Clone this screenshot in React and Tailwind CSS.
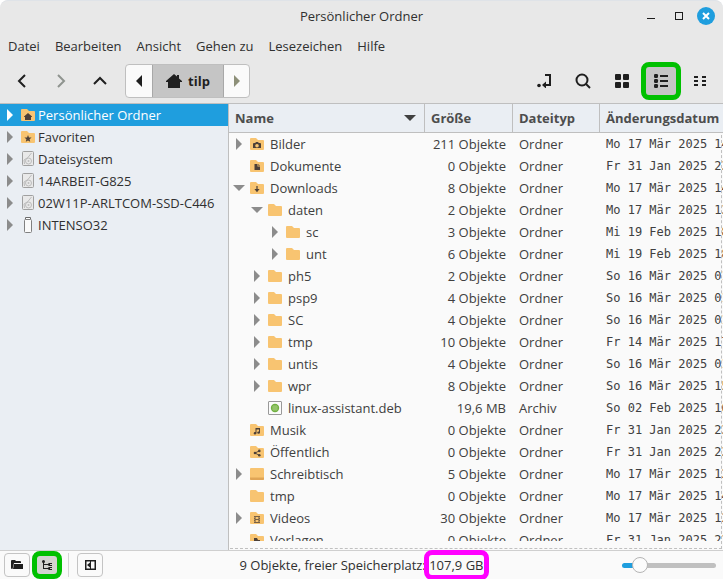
import React, { useState } from "react";

const places = [
  { name: "Persönlicher Ordner", icon: "home" },
  { name: "Favoriten", icon: "star" },
  { name: "Dateisystem", icon: "disk" },
  { name: "14ARBEIT-G825", icon: "disk" },
  { name: "02W11P-ARLTCOM-SSD-C446", icon: "disk" },
  { name: "INTENSO32", icon: "usb" },
];

const files = [
  { name: "Bilder", icon: "camera", level: 0, tree: "closed", size: "211 Objekte", type: "Ordner", date: "Mo 17 Mär 2025 14" },
  { name: "Dokumente", icon: "document", level: 0, size: "0 Objekte", type: "Ordner", date: "Fr 31 Jan 2025 23" },
  { name: "Downloads", icon: "download", level: 0, tree: "open", size: "8 Objekte", type: "Ordner", date: "Mo 17 Mär 2025 14" },
  { name: "daten", icon: "folder", level: 1, tree: "open", size: "2 Objekte", type: "Ordner", date: "Mo 17 Mär 2025 13" },
  { name: "sc", icon: "folder", level: 2, tree: "closed", size: "3 Objekte", type: "Ordner", date: "Mi 19 Feb 2025 18" },
  { name: "unt", icon: "folder", level: 2, tree: "closed", size: "6 Objekte", type: "Ordner", date: "Mi 19 Feb 2025 18" },
  { name: "ph5", icon: "folder", level: 1, tree: "closed", size: "2 Objekte", type: "Ordner", date: "So 16 Mär 2025 01" },
  { name: "psp9", icon: "folder", level: 1, tree: "closed", size: "4 Objekte", type: "Ordner", date: "So 16 Mär 2025 01" },
  { name: "SC", icon: "folder", level: 1, tree: "closed", size: "4 Objekte", type: "Ordner", date: "So 16 Mär 2025 01" },
  { name: "tmp", icon: "folder", level: 1, tree: "closed", size: "10 Objekte", type: "Ordner", date: "Fr 14 Mär 2025 17" },
  { name: "untis", icon: "folder", level: 1, tree: "closed", size: "4 Objekte", type: "Ordner", date: "So 16 Mär 2025 01" },
  { name: "wpr", icon: "folder", level: 1, tree: "closed", size: "8 Objekte", type: "Ordner", date: "So 16 Mär 2025 15" },
  { name: "linux-assistant.deb", icon: "deb", level: 1, size: "19,6 MB", type: "Archiv", date: "So 02 Feb 2025 16" },
  { name: "Musik", icon: "music", level: 0, size: "0 Objekte", type: "Ordner", date: "Fr 31 Jan 2025 23" },
  { name: "Öffentlich", icon: "share", level: 0, size: "0 Objekte", type: "Ordner", date: "Fr 31 Jan 2025 23" },
  { name: "Schreibtisch", icon: "desktop", level: 0, tree: "closed", size: "5 Objekte", type: "Ordner", date: "Mo 17 Mär 2025 12" },
  { name: "tmp", icon: "folder", level: 0, size: "0 Objekte", type: "Ordner", date: "Mo 17 Mär 2025 14" },
  { name: "Videos", icon: "video", level: 0, tree: "closed", size: "30 Objekte", type: "Ordner", date: "Mo 17 Mär 2025 12" },
  { name: "Vorlagen", icon: "template", level: 0, size: "0 Objekte", type: "Ordner", date: "Fr 31 Jan 2025 23" },
];

const menus = ["Datei", "Bearbeiten", "Ansicht", "Gehen zu", "Lesezeichen", "Hilfe"];

const indents = ["pl-1", "pl-[22px]", "pl-10"];

const emblems = {
  home: <path d="M7 4L3 7.5V8h1v3h6V8h1v-.5z" />,
  star: <path d="M7 4l1 2.4 2.6.2-2 1.7.6 2.5L7 9.4l-2.2 1.4.6-2.5-2-1.7L6 6.4z" />,
  camera: (
    <path
      fillRule="evenodd"
      d="M3 6q0-1 1-1h1.2l.8-1h2l.8 1H10q1 0 1 1v4H3zM7 5.9a1.8 1.8 0 1 0 0 3.6 1.8 1.8 0 0 0 0-3.6z"
    />
  ),
  document: <path d="M4.5 4h3v2.5H10V10H4.5zM8.3 4L10 5.7H8.3z" />,
  download: <path d="M6.4 4h1.2v3h2L7 10.2 4.4 7h2z" />,
  music: <path d="M5.5 4H10v4.6a1.4 1.2 0 1 1-1-1.1V5.6H6.5v3.6a1.4 1.2 0 1 1-1-1.1z" />,
  share: (
    <>
      <circle cx="5" cy="7" r="1.3" />
      <circle cx="9.3" cy="4.9" r="1.3" />
      <circle cx="9.3" cy="9.3" r="1.3" />
      <path d="M9.3 4.9L5 7l4.3 2.3" fill="none" stroke="#4d4038" strokeWidth=".9" />
    </>
  ),
  video: (
    <path
      fillRule="evenodd"
      opacity=".75"
      d="M4 4h6v7H4zM5.6 5v2h2.8V5zM5.6 8v2h2.8V8zM4.4 5v.8h.6V5zm0 2v.8h.6V7zm0 2v.8h.6V9zM9 5v.8h.6V5zm0 2v.8h.6V7zm0 2v.8h.6V9z"
    />
  ),
  template: <path d="M4 4h3l1 2h2v5H8L6.500 8.500 4 8z" />,
};

const FileIcon = ({ icon }) => {
  if (icon === "disk") {
    return (
      <svg width="14" height="18" viewBox="0 0 14 18" className="shrink-0">
        <rect x="1.500" y="1.500" width="11" height="14" rx="1" fill="#e9e9e9" stroke="#a0a0a0" />
        <path d="M3.500 14L3 10Q7 8.500 10.500 3" fill="none" stroke="#bcbcbc" />
        <circle cx="7.500" cy="11" r="3" fill="none" stroke="#bcbcbc" />
        <circle cx="7.500" cy="11" r="1" fill="#bcbcbc" />
      </svg>
    );
  }
  if (icon === "usb") {
    return (
      <svg width="14" height="18" viewBox="0 0 14 18" className="shrink-0">
        <path d="M4.500 3.500v-2h5v2" fill="#ffffff" stroke="#6d6d6d" />
        <rect x="3.500" y="3.500" width="7" height="13" rx="1" fill="#fafafa" stroke="#808080" />
      </svg>
    );
  }
  if (icon === "deb") {
    return (
      <svg width="14" height="14" viewBox="0 0 14 14" className="shrink-0">
        <rect x=".5" y=".5" width="13" height="13" rx=".5" fill="#fbfbfb" stroke="#999999" />
        <circle cx="7" cy="7" r="4.200" fill="#70b040" />
        <path d="M5 5h4v4H5zM7 5v4M5 7h4" fill="none" stroke="#a8d184" strokeWidth=".8" />
      </svg>
    );
  }
  if (icon === "desktop") {
    return (
      <svg width="14" height="12" viewBox="0 0 14 12" className="shrink-0">
        <rect width="14" height="12" rx="1" fill="#f8c471" />
        <path d="M0 9.500h14V11q0 1-1 1H1q-1 0-1-1z" fill="#e0a556" />
      </svg>
    );
  }
  return (
    <svg width="14" height="12" viewBox="0 0 14 12" className="shrink-0" fill="#4d4038">
      <path d="M0 1q0-1 1-1h5l2 2h5q1 0 1 1v8q0 1-1 1H1q-1 0-1-1z" fill="#f8c471" />
      {emblems[icon]}
    </svg>
  );
};

const Expander = ({ state, name, className = "text-[#8c8c8c]" }) => {
  if (!state) return <span className="w-3 shrink-0" />;
  return (
    <button aria-label={`${name} aufklappen`} className={`flex w-3 shrink-0 justify-center ${className}`}>
      {state === "open" ? (
        <svg width="12" height="6" viewBox="0 0 12 6" fill="currentColor">
          <path d="M0 0h12L6 6z" />
        </svg>
      ) : (
        <svg width="6" height="12" viewBox="0 0 6 12" fill="currentColor">
          <path d="M0 0l6 6-6 6z" />
        </svg>
      )}
    </button>
  );
};

const ToolButton = ({ label, children, className = "" }) => (
  <button aria-label={label} className={`relative flex h-8 w-8 items-center justify-center ${className}`}>
    {children}
  </button>
);

const TitleBar = () => (
  <header className="grid h-[31px] grid-cols-[1fr_auto_1fr] items-center rounded-t-lg border-t border-[#dfe3e8] text-[#303030]">
    <span />
    <h1>Persönlicher Ordner</h1>
    <div className="flex items-center justify-end gap-2 pr-2">
      <button aria-label="Minimieren" className="flex h-5 w-5 items-center justify-center">
        <svg width="10" height="10" viewBox="0 0 10 10">
          <path d="M1 7.500h8" stroke="#1c1c1c" />
        </svg>
      </button>
      <button aria-label="Maximieren" className="flex h-5 w-5 items-center justify-center">
        <svg width="8" height="8" viewBox="0 0 8 8">
          <rect x=".5" y=".5" width="7" height="7" fill="none" stroke="#1c1c1c" />
        </svg>
      </button>
      <button aria-label="Schließen" className="flex h-[18px] w-[18px] items-center justify-center rounded-full bg-[#1f9ede]">
        <svg width="8" height="8" viewBox="0 0 8 8">
          <path d="M1 1l6 6M7 1L1 7" stroke="#ffffff" strokeWidth="2" />
        </svg>
      </button>
    </div>
  </header>
);

const Toolbar = () => (
  <div className="flex h-[43px] items-center justify-between pr-[7px] pb-px pl-[6px] text-[#1f1f1f]">
    <div className="flex items-center gap-[7px]">
      <ToolButton label="Zurück">
        <svg width="10" height="14" viewBox="0 0 10 14" fill="none" stroke="currentColor" strokeWidth="2">
          <path d="M8 1L2 7l6 6" />
        </svg>
      </ToolButton>
      <ToolButton label="Vor" className="text-[#8f948f]">
        <svg width="10" height="14" viewBox="0 0 10 14" fill="none" stroke="currentColor" strokeWidth="2">
          <path d="M2 1l6 6-6 6" />
        </svg>
      </ToolButton>
      <ToolButton label="Nach oben">
        <svg width="14" height="10" viewBox="0 0 14 10" fill="none" stroke="currentColor" strokeWidth="2">
          <path d="M1 8l6-6 6 6" />
        </svg>
      </ToolButton>
      <nav aria-label="Pfad" className="ml-[2px] flex h-[34px] overflow-hidden rounded border border-[#bfbfbf] bg-[#fafafa]">
        <button aria-label="Pfad zurück" className="flex w-[26px] items-center justify-center">
          <svg width="6" height="12" viewBox="0 0 6 12" fill="currentColor">
            <path d="M6 0v12L0 6z" />
          </svg>
        </button>
        <button className="flex w-[72px] items-center justify-center gap-[6px] border-x border-[#a8a8a8] bg-[#c5c5c5] font-bold">
          <svg width="16" height="14" viewBox="0 0 16 14" fill="currentColor">
            <path d="M8 0l3 2.600V1h2v3.400L16 7v1h-2v6H2V8H0V7z" />
          </svg>
          tilp
        </button>
        <button aria-label="Pfad vor" className="flex w-[25px] items-center justify-center text-[#8d8f78]">
          <svg width="6" height="12" viewBox="0 0 6 12" fill="currentColor">
            <path d="M0 0l6 6-6 6z" />
          </svg>
        </button>
      </nav>
    </div>
    <div className="flex items-center gap-[7px]">
      <ToolButton label="Adresse eingeben">
        <svg width="14" height="14" viewBox="0 0 14 14" fill="none" stroke="currentColor" strokeWidth="2">
          <path d="M8 1h5v10H7" />
          <path d="M9 7.500v7L5 11z" fill="currentColor" stroke="none" />
          <circle cx="2" cy="11.500" r="1.800" fill="currentColor" stroke="none" />
        </svg>
      </ToolButton>
      <ToolButton label="Suchen">
        <svg width="16" height="16" viewBox="0 0 16 16" fill="none" stroke="currentColor" strokeWidth="2">
          <circle cx="7" cy="7" r="5.500" />
          <path d="M11 11l4 4" />
        </svg>
      </ToolButton>
      <ToolButton label="Symbolansicht">
        <svg width="14" height="14" viewBox="0 0 14 14" fill="currentColor">
          <rect width="6" height="6" rx="1" />
          <rect x="8" width="6" height="6" rx="1" />
          <rect y="8" width="6" height="6" rx="1" />
          <rect x="8" y="8" width="6" height="6" rx="1" />
        </svg>
      </ToolButton>
      <ToolButton label="Listenansicht" className="bg-[#c5c5c5]">
        <svg width="14" height="14" viewBox="0 0 14 14" fill="currentColor">
          <rect width="4" height="4" rx="1.200" />
          <rect y="5" width="4" height="4" rx="1.200" />
          <rect y="10" width="4" height="4" rx="1.200" />
          <path d="M6 1h8v2H6zM6 6h8v2H6zM6 11h8v2H6z" />
        </svg>
        <span className="absolute -inset-x-1 -inset-y-[3px] rounded-lg border-[5px] border-[#00c000]" />
      </ToolButton>
      <ToolButton label="Kompaktansicht">
        <svg width="12" height="10" viewBox="0 0 12 10" fill="currentColor">
          <path d="M0 0h4v2H0zM0 4h4v2H0zM0 8h4v2H0zM8 0h4v2H8zM8 4h4v2H8zM8 8h4v2H8z" />
        </svg>
      </ToolButton>
    </div>
  </div>
);

const Sidebar = () => {
  const [selected, setSelected] = useState(0);

  return (
    <aside className="w-[229px] shrink-0 border-r border-[#bfbfbf] bg-[#eaeef3]">
      <ul>
        {places.map((place, index) => (
          <li
            key={place.name}
            className={`flex h-[22px] items-center gap-[5px] pl-1 ${
              index === selected ? "bg-[#1f9ede] text-white" : "text-[#303030]"
            }`}
          >
            <Expander
              state="closed"
              name={place.name}
              className={index === selected ? "text-white" : "text-[#8c8c8c]"}
            />
            <button onClick={() => setSelected(index)} className="flex items-center gap-[3px] whitespace-nowrap">
              <FileIcon icon={place.icon} />
              {place.name}
            </button>
          </li>
        ))}
      </ul>
    </aside>
  );
};

const FileTable = () => (
  <main className="relative flex min-w-0 flex-1 flex-col bg-[#fafafa]">
    <div className="min-h-0 flex-1 overflow-hidden">
      <table className="w-full table-fixed border-collapse whitespace-nowrap text-[#404040]">
        <colgroup>
          <col className="w-[196px]" />
          <col className="w-[88px]" />
          <col className="w-[87px]" />
          <col />
        </colgroup>
        <thead>
          <tr className="h-[29px] bg-[#eaeef3] text-left text-[#4d4d4d] shadow-[inset_0_-1px_0_#bfbfbf]">
            <th className="p-0 pb-[2px] shadow-[inset_-1px_0_0_#bfbfbf]">
              <div className="flex items-center justify-between pr-[9px] pl-[6px]">
                Name
                <svg width="12" height="6" viewBox="0 0 12 6" fill="#404040">
                  <path d="M0 0h12L6 6z" />
                </svg>
              </div>
            </th>
            <th className="p-0 pb-[2px] pl-[6px] shadow-[inset_-1px_0_0_#bfbfbf]">Größe</th>
            <th className="p-0 pb-[2px] pl-[6px] shadow-[inset_-1px_0_0_#bfbfbf]">Dateityp</th>
            <th className="p-0 pb-[2px] pl-[6px]">Änderungsdatum</th>
          </tr>
        </thead>
        <tbody>
          {files.map((file, index) => (
            <tr key={index} className="h-[22px]">
              <td className="p-0">
                <div className={`flex items-center ${indents[file.level]}`}>
                  <Expander state={file.tree} name={file.name} />
                  <span className="flex items-center gap-[6px] pl-[5px]">
                    <FileIcon icon={file.icon} />
                    {file.name}
                  </span>
                </div>
              </td>
              <td className="p-0 pr-[7px] text-right">{file.size}</td>
              <td className="p-0 pl-[6px]">{file.type}</td>
              <td className="p-0 pl-[6px] font-['DejaVu_Sans_Mono',monospace] text-[12px]">{file.date}</td>
            </tr>
          ))}
        </tbody>
      </table>
    </div>
    <div className="h-[9px]" />
    <div className="pointer-events-none absolute top-[31px] right-px bottom-px left-px border-r border-b border-dashed border-[#c0c0c0]" />
  </main>
);

const StatusBar = () => {
  const [zoom, setZoom] = useState(13);
  const fill = `calc(8px + (100% - 16px) * ${zoom / 100})`;

  return (
    <footer className="grid h-[29px] shrink-0 grid-cols-[1fr_auto_1fr] items-center border-t border-[#cfcfcf] bg-[#fafafa] px-1 text-[#303030]">
      <div className="flex items-center">
        <button aria-label="Orte" className="flex h-6 w-[26px] items-center justify-center rounded-sm border border-[#c4c4c4]">
          <svg width="12" height="10" viewBox="0 0 12 10" fill="#1f1f1f">
            <path d="M0 1q0-1 1-1h3l1 1h4q1 0 1 1v1H3L1.500 9H1Q0 9 0 8z" />
            <path d="M3 4h9v5H2z" />
          </svg>
        </button>
        <button aria-label="Verzeichnisbaum" className="relative ml-1 flex h-6 w-[26px] items-center justify-center bg-[#d3d3d0]">
          <svg width="10" height="10" viewBox="0 0 10 10" fill="#1f1f1f">
            <circle cx="1.500" cy="1.500" r="1.500" />
            <path d="M1 1h1v8H1zM2 4h4v1H2zM2 8h4v1H2z" />
            <path d="M5 4.500L7 3h3v1H8v1h2v1H7zM5 8.500L7 7h3v1H8v1h2v1H7z" />
          </svg>
          <span className="absolute -inset-x-[2px] -inset-y-[2px] rounded-lg border-[5px] border-[#00c000]" />
        </button>
        <span className="mx-2 h-6 w-px bg-[#d4d4d4]" />
        <button aria-label="Seitenleiste ausblenden" className="flex h-6 w-[26px] items-center justify-center rounded-sm border border-[#c4c4c4]">
          <svg width="11" height="10" viewBox="0 0 11 10" fill="none" stroke="#1f1f1f">
            <rect x=".75" y=".75" width="9.500" height="8.500" strokeWidth="1.500" />
            <path d="M5.500 1v8" />
            <path d="M5 2.500v5L2 5z" fill="#1f1f1f" stroke="none" />
          </svg>
        </button>
      </div>
      <p>
        9 Objekte, freier Speicherplatz:{" "}
        <span className="relative">
          107,9 GB
          <span className="absolute -inset-x-[5px] -inset-y-[6px] rounded-lg border-[5px] border-[#ff00ff]" />
        </span>
      </p>
      <div className="flex justify-end pr-[3px]">
        <input
          type="range"
          aria-label="Vergrößerung"
          min="0"
          max="100"
          value={zoom}
          onChange={(e) => setZoom(Number(e.target.value))}
          style={{ background: `linear-gradient(to right, #1f9ede ${fill}, #c0c0c0 ${fill})` }}
          className="h-[5px] w-[94px] appearance-none rounded-full [&::-webkit-slider-thumb]:h-4 [&::-webkit-slider-thumb]:w-4 [&::-webkit-slider-thumb]:appearance-none [&::-webkit-slider-thumb]:rounded-full [&::-webkit-slider-thumb]:border [&::-webkit-slider-thumb]:border-[#b5b5b5] [&::-webkit-slider-thumb]:bg-[#fcfcfc]"
        />
      </div>
    </footer>
  );
};

export default function App() {
  return (
    <div className="flex h-screen flex-col overflow-hidden rounded-t-lg bg-[#e8e8e8] font-['Open_Sans','Noto_Sans',sans-serif] text-[13px] leading-[18px]">
      <TitleBar />
      <nav className="flex h-[29px] items-center gap-[15px] px-2 text-[#303030]">
        {menus.map((menu) => (
          <button key={menu}>{menu}</button>
        ))}
      </nav>
      <Toolbar />
      <div className="flex min-h-0 flex-1 border-t border-[#bfbfbf]">
        <Sidebar />
        <FileTable />
      </div>
      <StatusBar />
    </div>
  );
}
